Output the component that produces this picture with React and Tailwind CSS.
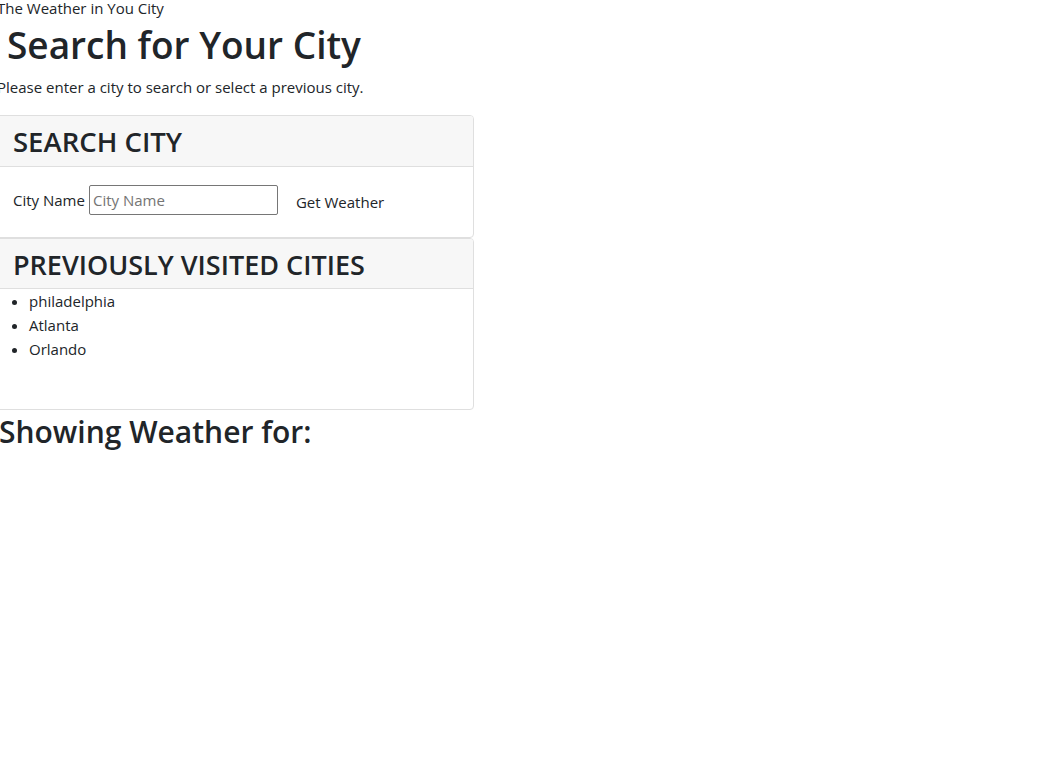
export default function App() {
  return (
    <div className="min-h-[777px] bg-white text-[#212529]" style={{ fontFamily: '"Open Sans", "Noto Sans", sans-serif' }}>
      <div className="ml-[-3px] w-[477px]">
        <div className="text-[15px] leading-[16px] pt-0">The Weather in You City</div>
        <h1 className="mt-[5px] ml-[10px] text-[37px] leading-[48px] font-semibold">Search for Your City</h1>
        <p className="mt-[6px] text-[15px] leading-[24px]">Please enter a city to search or select a previous city.</p>
        <div className="mt-[16px] ml-[-8px] w-[485px]">
          <div className="border border-[#dfdfdf] rounded-[4px] overflow-hidden">
            <div className="bg-[#f7f7f7] border-b border-[#dfdfdf] h-[51px] pl-[23px] flex items-center">
              <h2 className="mt-[2px] text-[27.5px] leading-[34px] font-semibold">SEARCH CITY</h2>
            </div>
            <div className="h-[70px] pl-[23px] flex items-center text-[15px]">
              <label className="mt-[-4px]">City Name</label>
              <input
                placeholder="City Name"
                className="ml-[4px] mt-[-4px] w-[189px] h-[30px] border border-[#767676] rounded-[2px] px-[3px] text-[15px] placeholder:text-[#757575] outline-none"
              />
              <button className="ml-[18px] text-[15px]">Get Weather</button>
            </div>
          </div>
          <div className="border border-[#dfdfdf] rounded-[4px] overflow-hidden h-[172px]">
            <div className="bg-[#f7f7f7] border-b border-[#dfdfdf] h-[50px] pl-[23px] flex items-center">
              <h2 className="mt-[2px] text-[27px] leading-[34px] font-semibold">PREVIOUSLY VISITED CITIES</h2>
            </div>
            <ul className="list-disc pl-[39px] text-[15px] leading-[24px]">
              <li>philadelphia</li>
              <li>Atlanta</li>
              <li>Orlando</li>
            </ul>
          </div>
        </div>
        <h2 className="mt-[2px] ml-[2px] text-[30px] leading-[40px] font-semibold">Showing Weather for:</h2>
      </div>
    </div>
  );
}
